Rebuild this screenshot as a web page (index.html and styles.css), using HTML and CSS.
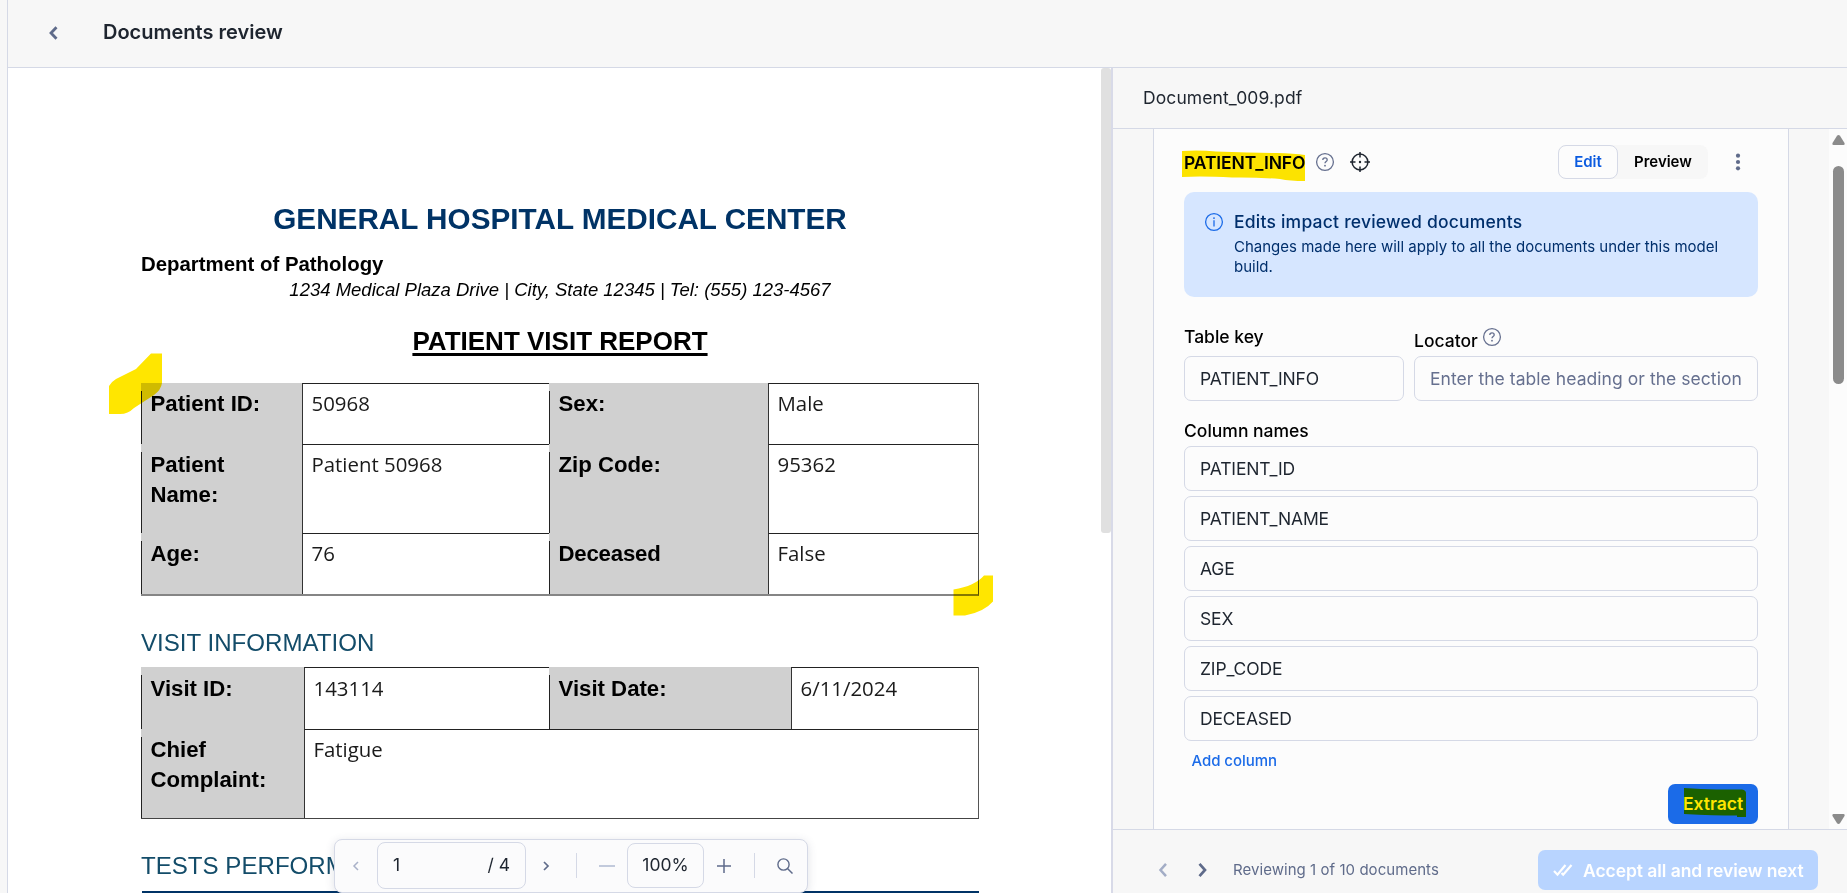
FILE: index.html
```html
<!DOCTYPE html>
<html lang="en">
<head>
<meta charset="utf-8">
<title>Documents review</title>
<link rel="stylesheet" href="styles.css">
</head>
<body>
<div class="app">
  <header class="topbar">
    <svg class="back" width="20" height="20" viewBox="0 0 20 20"><path d="M13.500 4.200 8 10l5.500 5.800" fill="none" stroke="#5f6b8a" stroke-width="2.800"/></svg>
    <h1 class="title">Documents review</h1>
  </header>
  <div class="content">
    <main class="viewer">
      <article class="paper">
        <h2 class="hospital"><span>GENERAL HOSPITAL MEDICAL CENTER</span></h2>
        <p class="dept"><span>Department of Pathology</span></p>
        <p class="address"><span>1234 Medical Plaza Drive | City, State 12345 | Tel: (555) 123-4567</span></p>
        <h3 class="report"><span>PATIENT VISIT REPORT</span></h3>
        <div class="grid patient">
          <div class="label">Patient ID:</div><div class="value">50968</div><div class="label">Sex:</div><div class="value">Male</div>
          <div class="label">Patient<br>Name:</div><div class="value">Patient 50968</div><div class="label">Zip Code:</div><div class="value">95362</div>
          <div class="label">Age:</div><div class="value">76</div><div class="label tight">Deceased</div><div class="value">False</div>
        </div>
        <h4 class="section"><span>VISIT INFORMATION</span></h4>
        <div class="grid visit">
          <div class="label first">Visit ID:</div><div class="value">143114</div><div class="label first">Visit Date:</div><div class="value">6/11/2024</div>
          <div class="label">Chief<br>Complaint:</div><div class="value wide">Fatigue</div>
        </div>
        <h4 class="section"><span>TESTS PERFORMED</span></h4>
        <div class="rule"></div>
      </article>
      <div class="viewer-thumb"></div>
      <svg class="mark mark-start" width="54" height="62" viewBox="0 0 54 62"><path d="M0 33Q2 29 7 26L27 16 42 .5H53V30Q52 37 45 42L25 55Q19 61 11 61H0Z" fill="#ffe600"/></svg>
      <svg class="mark mark-end" width="41" height="41" viewBox="0 0 41 41"><path d="M.5 14.500Q22 11 31 .5H40V26.500Q31 37 12 40.500H.5Z" fill="#ffe600"/></svg>
      <div class="toolbar">
        <svg class="tb-prev" width="10" height="12" viewBox="0 0 10 12"><path d="M7 2 3 6l4 4" fill="none" stroke="#a9b1c8" stroke-width="1.500"/></svg>
        <div class="page-box"><span>1</span><span class="total">/ 4</span></div>
        <svg class="tb-next" width="10" height="12" viewBox="0 0 10 12"><path d="m3 2 4 4-4 4" fill="none" stroke="#5f6b8a" stroke-width="1.700"/></svg>
        <i class="divider d1"></i>
        <svg class="tb-minus" width="16" height="16" viewBox="0 0 16 16"><path d="M0 8h16" stroke="#bcc4d8" stroke-width="1.800"/></svg>
        <div class="zoom-box">100%</div>
        <svg class="tb-plus" width="16" height="16" viewBox="0 0 16 16"><path d="M1 8h14M8 1v14" stroke="#5f6b8a" stroke-width="1.500"/></svg>
        <i class="divider d2"></i>
        <svg class="tb-search" width="16" height="16" viewBox="0 0 16 16"><circle cx="6.500" cy="6.500" r="5.600" fill="none" stroke="#5f6b8a" stroke-width="1.400"/><path d="m10.500 10.500 5 5" stroke="#5f6b8a" stroke-width="1.500"/></svg>
      </div>
    </main>
    <aside class="panel">
      <div class="panel-head">Document_009.pdf</div>
      <div class="panel-body">
        <section class="card">
          <div class="card-head">
            <div class="table-name"><span>PATIENT_INFO</span>
              <svg class="mark mark-name" width="124" height="32" viewBox="0 0 124 32"><path d="M0 1Q18 0 34 1.500 72 3 95 3 112 3.500 123 5V31Q108 31 98 29 72 27 50 27.500 20 26 0 27Z" fill="#ffe600"/></svg>
            </div>
            <svg class="help" width="20" height="20" viewBox="0 0 20 20" fill="none" stroke="#66708f" stroke-width="1.300"><circle cx="10" cy="10" r="8.400"/><path d="M7.800 8.100q0-2.200 2.200-2.200t2.200 2c0 1.700-2.200 1.600-2.200 3.400"/><circle cx="10" cy="13.700" r=".9" fill="#66708f" stroke="none"/></svg>
            <svg class="target" width="20" height="20" viewBox="0 0 20 20" fill="none" stroke="#1e252f" stroke-width="1.500"><circle cx="10" cy="10" r="7.900"/><path d="M10 0v5.500M10 14.500V20M0 10h5.500M14.500 10H20"/><circle cx="10" cy="10" r="1.200" fill="#1e252f" stroke="none"/></svg>
            <div class="switch"><span class="on">Edit</span><span class="off">Preview</span></div>
            <svg class="dots" width="6" height="20" viewBox="0 0 6 20" fill="#5f6b8a"><circle cx="3" cy="3.700" r="2.100"/><circle cx="3" cy="10" r="2.100"/><circle cx="3" cy="16.300" r="2.100"/></svg>
          </div>
          <div class="alert">
            <svg class="info" width="20" height="20" viewBox="0 0 20 20" fill="none" stroke="#1b6be8" stroke-width="1.300"><circle cx="10" cy="10" r="8.400"/><path d="M10 8.300v6.200"/><circle cx="10" cy="6.100" r=".95" fill="#1b6be8" stroke="none"/></svg>
            <div><div class="alert-title">Edits impact reviewed documents</div>
            <div class="alert-text">Changes made here will apply to all the documents under this model<br>build.</div></div>
          </div>
          <div class="fields">
            <div class="field key"><div class="caption">Table key</div><div class="input">PATIENT_INFO</div></div>
            <div class="field locator"><div class="caption">Locator
              <svg class="help" width="20" height="20" viewBox="0 0 20 20" fill="none" stroke="#66708f" stroke-width="1.300"><circle cx="10" cy="10" r="8.400"/><path d="M7.800 8.100q0-2.200 2.200-2.200t2.200 2c0 1.700-2.200 1.600-2.200 3.400"/><circle cx="10" cy="13.700" r=".9" fill="#66708f" stroke="none"/></svg></div>
              <div class="input hint">Enter the table heading or the section</div></div>
          </div>
          <div class="caption columns-caption">Column names</div>
          <div class="columns">
            <div class="input">PATIENT_ID</div>
            <div class="input">PATIENT_NAME</div>
            <div class="input">AGE</div>
            <div class="input">SEX</div>
            <div class="input">ZIP_CODE</div>
            <div class="input">DECEASED</div>
          </div>
          <div class="add">Add column</div>
          <div class="extract">Extract
            <svg class="mark mark-extract" width="62" height="30" viewBox="0 0 62 30"><path d="M0 0Q18 1 32 1.500H58Q62 2 62 5V29H53V27.500Q30 27.500 0 26Z" fill="#ffe600"/></svg>
          </div>
        </section>
        <div class="scroll">
          <svg width="13" height="10" viewBox="0 0 13 10"><path d="M5 .8Q6.500-.6 8 .8L12.500 8q.5 2-1 2h-10Q0 10 .5 8Z" fill="#8b8b8b"/></svg>
          <div class="scroll-thumb"></div>
          <svg class="down" width="13" height="10" viewBox="0 0 13 10"><path d="M5 9.200Q6.500 10.600 8 9.200L12.500 2q.5-2-1-2h-10Q0 0 .5 2Z" fill="#8b8b8b"/></svg>
        </div>
      </div>
      <footer class="panel-foot">
        <svg width="20" height="20" viewBox="0 0 20 20"><path d="M13 3.800 7.500 10l5.500 6.200" fill="none" stroke="#a3adc6" stroke-width="2.500"/></svg>
        <svg width="20" height="20" viewBox="0 0 20 20"><path d="m6.500 3.800 5.500 6.200-5.500 6.200" fill="none" stroke="#5f6b8a" stroke-width="2.700"/></svg>
        <span class="status">Reviewing 1 of 10 documents</span>
        <div class="accept"><svg width="20" height="14" viewBox="0 0 20 14"><path d="m1 8 3.500 3.700L12.500 2M8.500 10l1.700 1.700L18.500 2" fill="none" stroke="#fff" stroke-width="2.200"/></svg><span>Accept all and review next</span></div>
      </footer>
    </aside>
  </div>
</div>
</body>
</html>
```
FILE: styles.css
```css
* { box-sizing: border-box; }
body { margin: 0; font-family: Inter, "Liberation Sans", sans-serif; font-size: 17.5px; color: #1e252f; background: #f7f7f7; overflow: hidden; }
h1, h2, h3, h4, p { margin: 0; font-size: inherit; }
svg { display: block; flex: none; }
.app { width: 1847px; height: 893px; padding-left: 7px; display: flex; flex-direction: column; overflow: hidden; }
.topbar { height: 68px; flex: none; border-left: 1px solid #d5d9e6; border-bottom: 1px solid #d5d9e6; display: flex; align-items: center; padding: 0 0 3px 35px; }
.back { margin-top: 1px; }
.title { margin-left: 40px; font-size: 20px; font-weight: 600; line-height: 28px; }
.content { display: flex; flex: 1; min-height: 0; }

.viewer { position: relative; width: 1104px; background: #fff; border-left: 1px solid #d5d9e6; display: flex; justify-content: space-between; overflow: hidden; }
.viewer-thumb { width: 10px; height: 465px; background: #e0e0e0; border-radius: 3px; flex: none; }
.paper { font-family: "Liberation Sans", Arial, sans-serif; color: #000; width: 971px; padding: 134px 0 0 133px; flex: none; }
.hospital { font-size: 29.7px; line-height: 34px; color: #003366; text-align: center; white-space: nowrap; }
.dept { margin-top: 16px; font-size: 20.4px; line-height: 24px; font-weight: 700; }
.address { margin-top: 2px; font-size: 18.5px; line-height: 24px; font-style: italic; text-align: center; }
.report { margin-top: 24px; font-size: 26px; line-height: 30px; text-align: center; text-decoration: underline; text-decoration-thickness: 3px; text-underline-offset: 3px; }
.grid { display: grid; border-bottom: 1px solid #444; border-right: 1px solid #555; }
.patient { margin-top: 27px; grid-template-columns: 161px 247px 219px 210px; grid-template-rows: 61px 89px 61px; border-bottom: 2px solid #858585; }
.visit { margin-top: 10px; grid-template-columns: 163px 245px 242px 187px; grid-template-rows: 62px 89px; }
.label { position: relative; background: #d0d0d0; font-size: 22.2px; line-height: 30px; font-weight: 700; padding: 6px 0 0 9.5px; }
.label::before { content: ""; position: absolute; left: 0; top: 8px; bottom: 0; width: 1px; background: #222; }
.value { border-left: 1px solid #333; border-top: 1px solid #222; font-family: "Open Sans", sans-serif; font-size: 20.4px; line-height: 30px; padding: 4px 0 0 8.5px; color: #1a1a1a; }
.label.tight { letter-spacing: -.2px; }
.label.first { padding-top: 7px; }
.visit .value { padding-top: 5px; }
.visit .wide { padding-top: 4px; }
.wide { grid-column: span 3; }
.section { margin-top: 33px; font-size: 24.1px; line-height: 28px; font-weight: 400; color: #134c69; }
.rule { margin: 11px 0 0 1px; height: 2px; background: #003366; }

.mark { position: absolute; mix-blend-mode: multiply; }
.mark-start { left: 101px; top: 285px; }
.mark-end { left: 945px; top: 507px; }
.mark-name { left: -2px; top: -1px; }
.mark-extract { left: 16px; top: 4px; }

.toolbar { position: absolute; left: 326px; top: 771px; width: 474px; height: 54px; background: #fbfbfc; border: 1px solid #d5d9e6; border-radius: 8px; box-shadow: 0 2px 10px rgba(60,70,100,.16); display: flex; align-items: center; padding: 0 0 1px 16px; }
.page-box { margin-left: 16px; width: 149px; height: 47px; border: 1px solid #d5d9e6; border-radius: 8px; display: flex; align-items: center; justify-content: space-between; padding: 0 15px 3px 15px; }
.tb-next { margin-left: 15px; }
.divider { width: 1px; height: 25px; background: #d5d9e6; }
.d1 { margin-left: 25px; }
.tb-minus { margin-left: 22px; }
.zoom-box { margin-left: 12px; width: 77px; height: 45px; border: 1px solid #d5d9e6; border-radius: 8px; text-align: center; line-height: 41px; }
.tb-plus { margin-left: 12px; }
.d2 { margin-left: 22px; }
.tb-search { margin-left: 22px; }

.panel { flex: 1; border-left: 2px solid #d8dae8; display: flex; flex-direction: column; min-width: 0; }
.panel-head { height: 61px; flex: none; border-bottom: 1px solid #d5d9e6; padding: 18px 0 0 30px; line-height: 24px; letter-spacing: .1px; }
.panel-body { height: 700px; flex: none; display: flex; gap: 40px; padding-left: 40px; }
.card { flex: 1; background: #fcfcfc; border: 1px solid #d5d9e6; border-width: 0 1px; padding: 16px 30px 0; }
.card-head { display: flex; align-items: center; height: 34px; }
.table-name { position: relative; width: 121px; font-weight: 600; line-height: 24px; color: #000; letter-spacing: -.1px; margin-top: 1px; }
.card-head .help { margin-left: 10px; }
.target { margin-left: 15px; }
.switch { margin-left: auto; display: flex; width: 150px; height: 34px; background: #f7f7f7; border-radius: 8px; font-size: 15px; font-weight: 600; line-height: 32px; }
.on { width: 60px; border: 1px solid #d5d9e6; border-radius: 8px; background: #fcfcfc; color: #0b5be0; text-align: center; }
.off { padding-left: 16px; color: #000; line-height: 34px; }
.dots { margin: 0 17px 0 27px; }
.alert { margin-top: 13px; height: 105px; border-radius: 10px; background: #d6e6ff; color: #002f6c; display: flex; padding: 18px 0 0 20px; gap: 10px; white-space: nowrap; }
.info { margin-top: 2px; }
.alert-title { font-weight: 500; line-height: 24px; letter-spacing: .22px; }
.alert-text { font-size: 15px; line-height: 20px; margin-top: 3px; }
.fields { margin-top: 28px; display: flex; gap: 10px; }
.key { width: 220px; }
.locator { flex: 1; padding-top: 4px; }
.caption { display: flex; gap: 4px; font-weight: 500; line-height: 24px; height: 24px; color: #000; margin-bottom: 7px; }
.caption .help { margin-top: -2px; }
.locator .caption, .columns-caption { margin-bottom: 3px; }
.input { height: 45px; border: 1px solid #d5d9e6; border-radius: 7px; padding-left: 15px; line-height: 43px; white-space: nowrap; overflow: hidden; letter-spacing: -.14px; }
.hint { color: #66708f; letter-spacing: .05px; }
.columns-caption { margin-top: 18px; }
.columns { display: grid; gap: 5px; }
.add { margin: 10px 0 0 7.5px; font-size: 15px; line-height: 20px; font-weight: 500; color: #1b6be8; letter-spacing: -.05px; }
.extract { position: relative; margin: 13px 0 0 auto; width: 90px; height: 40px; border-radius: 7px; background: #1b6be8; color: #fff; font-weight: 600; line-height: 39px; padding-left: 15px; }
.scroll { width: 18px; background: #fcfcfc; display: flex; flex-direction: column; align-items: center; padding: 6px 0 5px 1px; }
.scroll-thumb { width: 11px; height: 218px; margin-top: 21px; border-radius: 6px; background: #8b8b8b; }
.down { margin-top: auto; }
.panel-foot { flex: 1; border-top: 1px solid #d5d9e6; display: flex; align-items: flex-start; gap: 20px; padding: 30px 29px 0 40px; }
.status { margin-left: 0; font-size: 15px; line-height: 20px; color: #5f6b8a; white-space: nowrap; letter-spacing: .05px; }
.accept { margin: -10px 0 0 auto; width: 280px; height: 40px; border-radius: 7px; background: #b8d4ff; color: #fff; display: flex; align-items: center; gap: 10px; padding-left: 15px; font-weight: 600; white-space: nowrap; letter-spacing: -.06px; }
```
